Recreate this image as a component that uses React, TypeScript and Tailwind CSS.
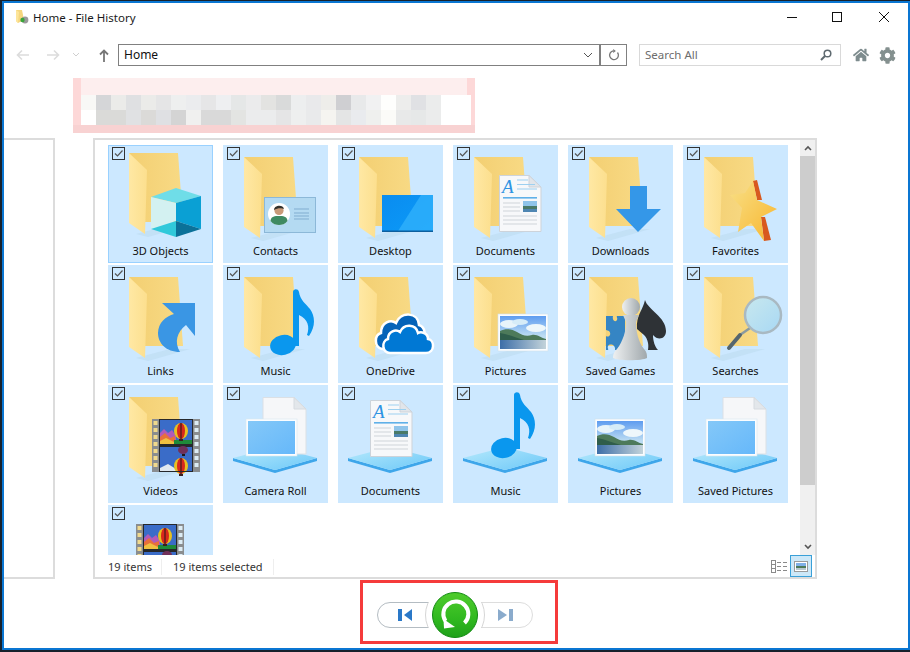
import type { ReactNode } from 'react'
import { FaCog, FaHome } from 'react-icons/fa'

const row1 = [
  'bg-[#f8f8f6]', 'bg-[#d5d6d8]', 'bg-[#ebebe9]', 'bg-[#dfe0e2]', 'bg-[#ebebe9]', 'bg-[#e5e5e6]', 'bg-[#eeefef]',
  'bg-[#ebecee]', 'bg-[#e6e6e7]', 'bg-[#eeeff1]', 'bg-[#e5e7e7]', 'bg-[#ebebec]', 'bg-[#e3e3e1]', 'bg-[#d9dada]',
  'bg-[#edeeef]', 'bg-[#e9e9eb]', 'bg-[#eeedea]', 'bg-[#cfcfd2]', 'bg-[#e8e9ea]', 'bg-[#f1f1f2]', 'bg-[#fefefd]',
  'bg-[#ededec]', 'bg-[#e0e1e4]', 'bg-[#ebecec]', 'bg-white', 'bg-white',
]
const row2 = [
  'bg-white', 'bg-[#dadad8]', 'bg-[#dadad8]', 'bg-[#e0e1e3]', 'bg-[#dbdad8]', 'bg-[#dfe0e3]', 'bg-[#d4d4d4]',
  'bg-[#f0f0ef]', 'bg-[#d9d9d9]', 'bg-[#d9d9d9]', 'bg-[#e3e4e2]', 'bg-[#ebeced]', 'bg-[#ebeced]', 'bg-[#e5e5e6]',
  'bg-[#eeefef]', 'bg-[#e9eaeb]', 'bg-[#f5f4f0]', 'bg-[#e4e5e5]', 'bg-[#e9ebee]', 'bg-[#eff0ee]', 'bg-[#fbfbf8]',
  'bg-[#e8e9e9]', 'bg-[#e6e8e8]', 'bg-[#ebecec]', 'bg-white', 'bg-white',
]

function Folder({ dy = 0 }: { dy?: number }) {
  return (
    <g transform={`translate(0 ${dy})`}>
      <polygon points="28,93 62,84 82,84 40,96" fill="#b9d9ee" opacity="0.5" />
      <polygon points="21,12 70,12 75,81 37,81" fill="url(#folderBack)" />
      <polygon points="21,12 39,29 37,93 21,82" fill="url(#folderFront)" />
    </g>
  )
}

function Photo({ x, y }: { x: number; y: number }) {
  return (
    <g transform={`translate(${x} ${y})`}>
      <rect width="50" height="37" fill="#fbfdff" stroke="#cfe0ea" strokeWidth="0.6" />
      <rect x="2" y="2" width="46" height="33" fill="url(#sky)" />
      <ellipse cx="11" cy="10" rx="9" ry="4" fill="#e8f4fa" />
      <ellipse cx="22" cy="8" rx="8" ry="3" fill="#d6ecf8" />
      <ellipse cx="38" cy="14" rx="10" ry="4" fill="#eef7fb" />
      <path d="M2 17 C8 14 14 15 19 18 C24 21 28 23 34 21 C39 20 43 24 48 25 V27 H2 Z" fill="#4d7a5a" />
      <path d="M2 19 C10 20 18 24 26 26 H2 Z" fill="#2f5d4b" />
      <rect x="2" y="26" width="46" height="9" fill="url(#water)" />
    </g>
  )
}

function Platform() {
  return (
    <g>
      <polygon points="10,73 10,76 52,88 94,76 94,73 52,85" fill="#3ea6ea" />
      <polygon points="10,73 52,62 94,73 52,85" fill="url(#platform)" />
    </g>
  )
}

function Doc({ x, y }: { x: number; y: number }) {
  return (
    <g transform={`translate(${x} ${y})`}>
      <path d="M0.5 0.5 H30 L42 12 V56.5 H0.5 Z" fill="#f7f8fa" stroke="#cdd3da" />
      <path d="M30 0.5 V12 H42 Z" fill="#e1e5ea" stroke="#cdd3da" />
      <text x="3" y="18" fontFamily="'Liberation Serif', serif" fontStyle="italic" fontSize="19" fill="#2f93e2">A</text>
      <path d="M18 5 H29 M18 9.5 H36 M18 14 H38" stroke="#9dd0f0" strokeWidth="1" />
      <rect x="4" y="22" width="34" height="1.6" fill="#5fb0e8" />
      <path d="M4 28 H21 M4 32 H21 M4 36 H21 M4 41 H38 M4 45 H38 M4 49 H38" stroke="#cfd4d9" strokeWidth="1" />
      <rect x="24" y="26" width="14" height="11" fill="#8fc4ea" />
      <rect x="24" y="31" width="14" height="3" fill="#4a7a68" />
      <rect x="24" y="34" width="14" height="3" fill="#4f86b2" />
    </g>
  )
}

function Balloon({ cx, cy }: { cx: number; cy: number }) {
  return (
    <g>
      <ellipse cx={cx} cy={cy} rx="7" ry="8" fill="#e8c020" />
      <ellipse cx={cx} cy={cy} rx="4" ry="8" fill="#d8281c" />
      <path d={`M${cx} ${cy - 8} V${cy + 8}`} stroke="#201818" strokeWidth="1" />
      <rect x={cx - 2} y={cy + 8} width="4" height="2" fill="#3a2020" />
    </g>
  )
}

function Film({ x, y }: { x: number; y: number }) {
  const holes = [2, 9, 16, 23, 30, 37, 44]
  return (
    <g transform={`translate(${x} ${y})`}>
      <rect width="48" height="53" fill="#8a8d8f" />
      {holes.map((h) => (
        <g key={h}>
          <rect x="1.5" y={h} width="4" height="4" fill="#f0d98c" />
          <rect x="42.5" y={h} width="4" height="4" fill="#dcecf4" />
        </g>
      ))}
      <rect x="7" y="0" width="34" height="53" fill="#26282b" />
      <rect x="8" y="1" width="32" height="24" fill="#3a6cc8" />
      <rect x="8" y="28" width="32" height="24" fill="#3a6cc8" />
      <path d="M8 14 L12 10 L16 14 L20 11 L24 17 V25 H8 Z" fill="#b25ab8" />
      <path d="M8 18 L13 14 L18 19 L23 17 V25 H8 Z" fill="#e8703a" />
      <path d="M8 22 L14 19 L22 23 V25 H8 Z" fill="#f0c040" />
      <rect x="22" y="21" width="18" height="4" fill="#1f8a3a" />
      <Balloon cx={29} cy={12} />
      <ellipse cx="31" cy="31" rx="5" ry="4" fill="#70305a" />
      <rect x="30" y="35" width="3" height="2" fill="#201818" />
      <path d="M8 49 L16 45 L24 50 V52 H8 Z" fill="#dfe8f0" />
      <Balloon cx={29} cy={47} />
      <rect x="8" y="52" width="32" height="1" fill="#26282b" />
    </g>
  )
}

function Note({ x, y }: { x: number; y: number }) {
  return (
    <g transform={`translate(${x} ${y})`} fill="#0a97ee">
      <path d="M0 3 C0 0 5 -1 6 3 C7 11 13 15 17 20 C22 27 23 37 16 47 L14 46 C17 38 15 30 6 26 V57 H0 Z" />
      <ellipse cx="-10" cy="56" rx="13" ry="10" transform="rotate(-12 -10 56)" />
    </g>
  )
}

function Stack() {
  return (
    <g>
      <path d="M40 12.5 H71 L83 24 V69 H40 Z" fill="#f6f7f9" stroke="#dbe0e5" />
      <path d="M71 12.5 V24 H83 Z" fill="#e3e7eb" stroke="#d6dbe0" />
      <rect x="23" y="34" width="51" height="37" fill="#fbfdff" stroke="#d8e6ef" strokeWidth="0.6" />
      <rect x="25" y="36" width="47" height="33" fill="url(#paleBlue)" />
    </g>
  )
}

const icons: Record<string, ReactNode> = {
  cube: (
    <>
      <Folder dy={-4} />
      <polygon points="43,52 68,43 93,51 68,58" fill="#6fdde8" />
      <polygon points="43,52 68,58 68,76 43,84" fill="#d3f1f1" />
      <polygon points="93,51 68,58 68,76 93,84" fill="#0aa0d4" />
      <polygon points="43,84 68,76 68,92" fill="#30c9da" />
      <polygon points="93,84 68,76 68,92" fill="#0b7199" />
    </>
  ),
  contacts: (
    <>
      <Folder />
      <rect x="41.5" y="52.5" width="51" height="35" fill="#b4daf2" stroke="#8cb8d8" />
      <circle cx="56" cy="69" r="11" fill="#fff" />
      <path d="M47.5 76 C48 71 52 71 56 71 C60 71 64 71 64.5 76 C62 79 59 80 56 80 C53 80 50 79 47.5 76 Z" fill="#3f8a62" />
      <circle cx="56" cy="65.500" r="4.600" fill="#c99a78" />
      <path d="M51 65 C51 60 60 59 61 64 C59 63 54 63 51 65 Z" fill="#30302c" />
      <path d="M71 64 H86 M71 68 H86 M71 71 H86 M71 74 H86" stroke="#7aa8cc" strokeWidth="0.9" />
    </>
  ),
  desktop: (
    <>
      <Folder />
      <rect x="44" y="50" width="51" height="37" fill="url(#screen)" />
      <polygon points="60,86 83,50 95,50 95,86" fill="#2fb0fb" opacity="0.8" />
      <rect x="44" y="85.500" width="51" height="1.500" fill="#0d5f9e" />
    </>
  ),
  documents: (
    <>
      <Folder />
      <Doc x={46} y={30} />
    </>
  ),
  downloads: (
    <>
      <Folder />
      <polygon points="62,41 79,41 79,64 93,64 70,87 48,64 62,64" fill="#3497e8" />
    </>
  ),
  favorites: (
    <>
      <Folder />
      <polygon points="70,36 74,35 79,55 74,55" fill="#d8591f" />
      <polygon points="78,72 82,72 88,95 81,96" fill="#d8591f" />
      <polygon points="70,36 74,55 94,64 78,72 81,96 68,78 55,87 59,63 47,50 62,48" fill="url(#star)" />
    </>
  ),
  links: (
    <>
      <Folder />
      <path d="M54 38 H87 V71 L78 60 C69 67 66 77 72 87 C58 87 50 78 50 68 C50 58 58 51 66 49 Z" fill="#3a96e4" />
    </>
  ),
  music: (
    <>
      <Folder />
      <Note x={70} y={24} />
    </>
  ),
  onedrive: (
    <>
      <Folder />
      <path d="M44 84 C36 82 36 70 43 68 C43 57 53 54 58 58 C63 46 80 47 81 60 C88 62 88 72 84 76 L60 84 Z" fill="#0563b8" stroke="#fff" strokeWidth="2.500" />
      <path d="M52 88 C44 88 43 76 50 74 C50 66 58 64 62 67 C66 58 78 59 80 68 C83 66 90 68 90 74 C97 75 97 88 88 88 Z" fill="#0078d4" stroke="#fff" strokeWidth="2.500" />
    </>
  ),
  pictures: (
    <>
      <Folder />
      <Photo x={45} y={49} />
    </>
  ),
  games: (
    <>
      <Folder />
      <path d="M38 51 H45 C44 55 47 58 49 55 C50 53 48 52 49 51 H57 V85 H47 C48 80 42 78 40 81 C39 83 41 84 40 85 H38 V71 C41 73 44 69 41 66 L38 65 Z" fill="#3585c4" />
      <path d="M77 35 C80 45 98 52 98 66 C98 74 90 76 85 70 C85 76 87 82 90 85 H80 C81 80 80 74 76 70 L69 64 C68 50 75 45 77 35 Z" fill="#2e3236" />
      <circle cx="63" cy="42" r="9" fill="url(#pawn)" />
      <path d="M55 50 H71 L68 57 C68 66 70 76 76 84 C79 87 79 90 79 93 C74 96 50 96 45 93 C45 89 46 87 49 84 C55 76 58 66 58 57 Z" fill="url(#pawn)" />
    </>
  ),
  searches: (
    <>
      <Folder />
      <path d="M67 63 L57 70" stroke="#8a9aa0" strokeWidth="2.500" />
      <path d="M57 70 L46 83" stroke="#56666e" strokeWidth="4" strokeLinecap="round" />
      <circle cx="80" cy="50" r="18" fill="url(#lens)" stroke="#a9b9c2" strokeWidth="2.500" />
    </>
  ),
  videos: (
    <>
      <Folder />
      <Film x={44} y={34} />
    </>
  ),
  roll: (
    <>
      <Platform />
      <Stack />
    </>
  ),
  libDocs: (
    <>
      <Platform />
      <Doc x={32} y={15} />
    </>
  ),
  libMusic: (
    <>
      <Platform />
      <Note x={61} y={7} />
    </>
  ),
  libPictures: (
    <>
      <Platform />
      <Photo x={27} y={34} />
    </>
  ),
  libVideos: <Film x={28} y={19} />,
}

const tiles = [
  { label: '3D Objects', icon: 'cube', active: true },
  { label: 'Contacts', icon: 'contacts' },
  { label: 'Desktop', icon: 'desktop' },
  { label: 'Documents', icon: 'documents' },
  { label: 'Downloads', icon: 'downloads' },
  { label: 'Favorites', icon: 'favorites' },
  { label: 'Links', icon: 'links' },
  { label: 'Music', icon: 'music' },
  { label: 'OneDrive', icon: 'onedrive' },
  { label: 'Pictures', icon: 'pictures' },
  { label: 'Saved Games', icon: 'games' },
  { label: 'Searches', icon: 'searches' },
  { label: 'Videos', icon: 'videos' },
  { label: 'Camera Roll', icon: 'roll' },
  { label: 'Documents', icon: 'libDocs' },
  { label: 'Music', icon: 'libMusic' },
  { label: 'Pictures', icon: 'libPictures' },
  { label: 'Saved Pictures', icon: 'roll' },
  { label: '', icon: 'libVideos' }, // scrolled off, label is below the fold
]

function Tile({ label, icon, active }: { label: string; icon: string; active?: boolean }) {
  return (
    <div className={`relative h-[118px] w-[105px] bg-[#cce8ff] ${active ? 'border border-[#99d1ff]' : ''}`}>
      <svg viewBox="0 0 105 100" className={`absolute h-[100px] w-[105px] ${active ? '-left-px -top-px' : 'left-0 top-0'}`}>
        {icons[icon]}
      </svg>
      <div className={`absolute flex h-[13px] w-[13px] items-center justify-center border border-[#333] ${active ? 'left-[3px] top-px' : 'left-1 top-0.5'}`}>
        <svg viewBox="0 0 11 11" className="h-[11px] w-[11px]">
          <path d="M2 5.500 L4.500 8 L9.500 2.500" fill="none" stroke="#555" strokeWidth="1.200" />
        </svg>
      </div>
      {label && (
        <div className={`absolute inset-x-0 text-center text-[11px] leading-4 text-[#111] ${active ? 'top-[97px]' : 'top-[98px]'}`}>{label}</div>
      )}
    </div>
  )
}

export default function App() {
  return (
    <div className="h-[652px] w-[910px] overflow-hidden bg-[#17212c] pb-0.5 pl-0.5 pt-px font-['Noto_Sans',sans-serif]">
      <svg className="absolute h-0 w-0">
        <defs>
          <linearGradient id="folderBack" x1="0" x2="1" y1="0" y2="0">
            <stop offset="0" stopColor="#f3cf72" />
            <stop offset="1" stopColor="#f8da85" />
          </linearGradient>
          <linearGradient id="folderFront" x1="0" x2="1" y1="0" y2="0">
            <stop offset="0" stopColor="#ffe8a4" />
            <stop offset="1" stopColor="#fcdf8e" />
          </linearGradient>
          <linearGradient id="sky" x1="0" x2="0" y1="0" y2="1">
            <stop offset="0" stopColor="#5e9cf0" />
            <stop offset="0.6" stopColor="#bcdcf2" />
          </linearGradient>
          <linearGradient id="water" x1="0" x2="1" y1="0" y2="0">
            <stop offset="0" stopColor="#3d6ea8" />
            <stop offset="1" stopColor="#c3d3da" />
          </linearGradient>
          <linearGradient id="platform" x1="0" x2="1" y1="0" y2="1">
            <stop offset="0" stopColor="#b8eafc" />
            <stop offset="1" stopColor="#6cc8f8" />
          </linearGradient>
          <linearGradient id="screen" x1="0" x2="1" y1="0" y2="1">
            <stop offset="0" stopColor="#0a8cf0" />
            <stop offset="1" stopColor="#0b9bf8" />
          </linearGradient>
          <linearGradient id="paleBlue" x1="0" x2="1" y1="0" y2="1">
            <stop offset="0" stopColor="#84c8f8" />
            <stop offset="1" stopColor="#66b8fa" />
          </linearGradient>
          <linearGradient id="star" x1="0" x2="1" y1="0" y2="1">
            <stop offset="0" stopColor="#f8e088" />
            <stop offset="1" stopColor="#f8b52c" />
          </linearGradient>
          <linearGradient id="pawn" x1="0" x2="1" y1="0" y2="0">
            <stop offset="0" stopColor="#eef0f1" />
            <stop offset="1" stopColor="#a0a8ac" />
          </linearGradient>
          <linearGradient id="lens" x1="0" x2="1" y1="0" y2="1">
            <stop offset="0" stopColor="#c8e8ee" />
            <stop offset="1" stopColor="#a8d8f4" />
          </linearGradient>
          <linearGradient id="restore" x1="0" x2="0" y1="0" y2="1">
            <stop offset="0" stopColor="#4fcc2c" />
            <stop offset="0.6" stopColor="#2fb81f" />
            <stop offset="1" stopColor="#1fa01a" />
          </linearGradient>
        </defs>
      </svg>

      <div className="flex h-[649px] w-[907.5px] flex-col border-2 border-[#0a76d2] bg-white">
        {/* title bar */}
        <div className="flex h-[41px] items-start">
          <svg viewBox="0 0 14 14" className="ml-[11px] mt-[7px] h-3.5 w-3.5">
            <polygon points="1,0 7,0 9,10 3,13 1,11" fill="#f5d67e" />
            <polygon points="1,0 4,2 3,13 1,11" fill="#fde59a" />
            <circle cx="10" cy="10" r="3.400" fill="#9a9a9a" />
            <circle cx="7.500" cy="10" r="2.200" fill="#3aa53a" />
          </svg>
          <span className="ml-1 mt-[6px] text-[11.5px] leading-[18px] text-[#1a1a1a]">Home - File History</span>
          <svg viewBox="0 0 12 12" className="ml-auto mr-[32.5px] mt-[8px] h-3 w-3" stroke="#111" fill="none">
            <path d="M1 6.500 H11" />
          </svg>
          <svg viewBox="0 0 12 12" className="mr-[35px] mt-[8px] h-3 w-3" stroke="#111" fill="none">
            <rect x="1.500" y="1.500" width="9" height="9" />
          </svg>
          <svg viewBox="0 0 12 12" className="mr-[18px] mt-[8px] h-3 w-3" stroke="#111" fill="none">
            <path d="M1 1 L11 11 M11 1 L1 11" />
          </svg>
        </div>

        {/* toolbar */}
        <div className="flex h-[22px] items-center">
          <svg viewBox="0 0 14 12" className="ml-3 h-3 w-3.5" fill="none" stroke="#dcdcdc" strokeWidth="1.600">
            <path d="M13 6 H2 M6 1.500 L1.500 6 L6 10.500" />
          </svg>
          <svg viewBox="0 0 14 12" className="ml-4 h-3 w-3.5" fill="none" stroke="#dcdcdc" strokeWidth="1.600">
            <path d="M1 6 H12 M8 1.500 L12.500 6 L8 10.500" />
          </svg>
          <svg viewBox="0 0 8 6" className="ml-3 h-1.5 w-2" fill="none" stroke="#d0d0d0">
            <path d="M1 1 L4 4 L7 1" />
          </svg>
          <svg viewBox="0 0 10 13" className="ml-[19px] h-[13px] w-2.5" fill="none" stroke="#777" strokeWidth="1.800">
            <path d="M5 13 V2 M1 5.500 L5 1.500 L9 5.500" />
          </svg>
          <div className="ml-[9px] flex h-[22px] w-[509px] items-center border border-[#808080]">
            <span className="flex-1 pl-[5px] text-xs text-[#111]">Home</span>
            <svg viewBox="0 0 10 6" className="mr-1.5 h-1.5 w-2.5" fill="none" stroke="#555">
              <path d="M1 1 L5 5 L9 1" />
            </svg>
            <div className="flex h-full w-[27px] items-center justify-center border-l-2 border-[#808080]">
              <svg viewBox="0 0 12 12" className="h-3 w-3" fill="none" stroke="#777" strokeWidth="1.300">
                <path d="M9.500 3.500 A4.400 4.400 0 1 1 5 1.900" />
                <path d="M5.200 0 L7.800 2 L5.200 4 Z" fill="#777" stroke="none" />
              </svg>
            </div>
          </div>
          <div className="ml-3 flex h-[22px] w-[202px] items-center border border-[#d9d9d9] pl-[5px]">
            <span className="flex-1 text-[11.5px] text-[#6d6d6d]">Search All</span>
            <svg viewBox="0 0 12 12" className="mr-2 h-3 w-3" fill="none" stroke="#5f6a70" strokeWidth="1.500">
              <circle cx="7.500" cy="4.500" r="3.300" />
              <path d="M5 7 L1 11" strokeWidth="2" />
            </svg>
          </div>
          <FaHome className="ml-3 h-4 w-4 text-[#7e8c8e]" />
          <FaCog className="ml-[10px] h-[17px] w-[17px] text-[#84908f]" />
        </div>

        {/* blurred banner */}
        <div className="ml-[69px] mt-3 flex h-[55px] w-[402px] flex-col bg-[#fdd8d8] px-2">
          <div className="h-[17px] shrink-0 bg-[#fdeeee]" />
          <div className="grid grid-cols-[repeat(26,15px)] grid-rows-[15px_15px]">
            {row1.map((c, i) => (
              <div key={`a${i}`} className={c} />
            ))}
            {row2.map((c, i) => (
              <div key={`b${i}`} className={c} />
            ))}
          </div>
          <div className="-mx-2 h-2 bg-[#f8d2d2]" />
        </div>

        {/* panels */}
        <div className="mt-[5px] flex h-[441px] items-stretch">
          <div className="w-[51px] border-y-2 border-r-2 border-[#dcdcdc]" />
          <div className="ml-[38px] flex w-[724px] flex-col border-2 border-[#dcdcdc]">
            <div className="flex h-[415px]">
              <div className="flex-1 overflow-hidden pl-[13px] pt-[5px]">
                <div className="grid grid-cols-[repeat(6,105px)] gap-x-[10px] gap-y-[2px]">
                  {tiles.map((t, i) => (
                    <Tile key={i} label={t.label} icon={t.icon} active={t.active} />
                  ))}
                </div>
              </div>
              <div className="flex w-[15px] flex-col items-center bg-[#f0f0f0]">
                <div className="flex h-4 w-full items-center justify-center">
                  <svg viewBox="0 0 8 6" className="h-1.5 w-2" fill="none" stroke="#555" strokeWidth="1.600">
                    <path d="M1 5 L4 2 L7 5" />
                  </svg>
                </div>
                <div className="h-[329px] w-full bg-[#cdcdcd]" />
                <div className="mt-auto flex h-4 w-full items-center justify-center">
                  <svg viewBox="0 0 8 6" className="h-1.5 w-2" fill="none" stroke="#555" strokeWidth="1.600">
                    <path d="M1 1 L4 4 L7 1" />
                  </svg>
                </div>
              </div>
            </div>
            <div className="flex flex-1 items-center pl-[13px] text-[11px] text-[#333]">
              <span className="mt-0.5 w-[54px] border-r border-[#eeeeee]">19 items</span>
              <span className="ml-[11px] mt-0.5 w-[101px] border-r border-[#eeeeee]">19 items selected</span>
              <svg viewBox="0 0 17 13" className="ml-auto mr-[2px] h-[13px] w-[17px]" fill="none" stroke="#8a8a8a">
                <rect x="0.500" y="0.500" width="4" height="12" />
                <path d="M0.500 4.500 H4.500 M0.500 8.500 H4.500 M6 2.500 H10 M12 2.500 H16 M6 6.500 H10 M12 6.500 H16 M6 10.500 H10 M12 10.500 H16" />
              </svg>
              <div className="mr-[3px] flex h-[22px] w-[22px] items-center justify-center border border-[#3aa0d8] bg-[#cde8f8]">
                <svg viewBox="0 0 14 11" className="h-[11px] w-3.5">
                  <rect x="0.500" y="0.500" width="13" height="10" fill="#fff" stroke="#9a9a9a" />
                  <rect x="2" y="2" width="10" height="3" fill="#7fb0e8" />
                  <rect x="2" y="5" width="10" height="2" fill="#4d7a5a" />
                  <rect x="2" y="7" width="10" height="2" fill="#b8c8d0" />
                </svg>
              </div>
            </div>
          </div>
        </div>

        {/* restore controls */}
        <div className="ml-[356px] mt-px h-[64px] w-[198px] border-[3px] border-[#f53b3b] pl-3.5 pt-[19px]">
          <div className="relative h-[26px] w-[156px]">
            <div className="absolute left-0 top-0 flex h-[26px] w-[78px] items-center rounded-l-[13px] border border-[#b4bcc2] pl-5">
              <svg viewBox="0 0 14 12" className="h-3 w-3.5" fill="#2a78c8">
                <rect x="0" y="0" width="4" height="12" />
                <polygon points="6,6 14,0 14,12" />
              </svg>
            </div>
            <div className="absolute right-0 top-0 flex h-[26px] w-[78px] items-center justify-end rounded-r-[13px] border border-[#dddddd] pr-[19px]">
              <svg viewBox="0 0 15 12" className="h-3 w-[15px]" fill="#8aabcc">
                <polygon points="0,0 9,6 0,12" />
                <rect x="11" y="0" width="4" height="12" />
              </svg>
            </div>
            {/* the arc cut out of both pills around the round button */}
            <div className="absolute left-[48px] top-0 h-[26px] w-[60px] overflow-hidden">
              <div className="absolute left-0 top-[-17px] h-[60px] w-[60px] rounded-full border border-[#d6d6d6] bg-white" />
            </div>
            <svg viewBox="0 0 46 46" className="absolute left-[55px] top-[-10px] h-[46px] w-[46px]">
              <circle cx="23" cy="23" r="22.500" fill="url(#restore)" stroke="#128a12" />
              <path d="M32.500 31 A12.500 12.500 0 1 0 13.500 29" fill="none" stroke="#fff" strokeWidth="4" />
              <polygon points="11.500,27 23,35 12,36.500" fill="#fff" />
            </svg>
          </div>
        </div>
      </div>
    </div>
  )
}
